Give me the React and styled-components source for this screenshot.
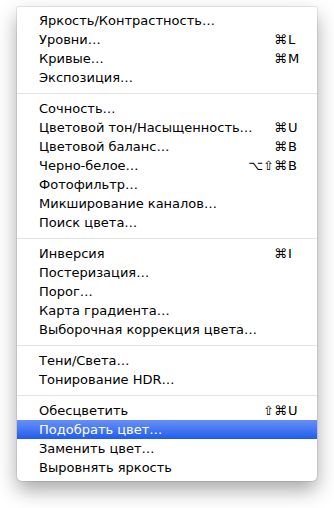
import React from 'react';
import styled, { createGlobalStyle } from 'styled-components';

const GlobalStyle = createGlobalStyle`
  html, body {
    margin: 0;
    padding: 0;
    background: #ffffff;
  }
  body {
    font-family: "DejaVu Sans", "Liberation Sans", sans-serif;
    -webkit-font-smoothing: antialiased;
  }
`;

const Page = styled.div`
  width: 334px;
  height: 508px;
  padding: 7px 0 0 17px;
  box-sizing: border-box;
`;

const Menu = styled.div`
  width: 300px;
  box-sizing: border-box;
  padding: 4px 0;
  background: #ffffff;
  border-radius: 2px 2px 5px 5px;
  box-shadow: 0 0 0 1px rgba(0, 0, 0, 0.08), 0 9px 20px rgba(0, 0, 0, 0.35);
`;

const Item = styled.div`
  display: flex;
  align-items: center;
  height: 19px;
  padding: 0 14px 0 22px;
  font-size: 13px;
  color: ${(p) => (p.$active ? '#ffffff' : '#000000')};
  background: ${(p) =>
    p.$active ? 'linear-gradient(to bottom, #6690f7 0%, #4a7af3 45%, #1f5cec 100%)' : 'transparent'};
`;

const Label = styled.span`
  flex: 1;
  white-space: nowrap;
`;

const Shortcut = styled.span`
  display: grid;
  grid-template-columns: auto 15px;
  align-items: center;
`;

const Mods = styled.span`
  text-align: right;
  padding-right: 1px;
  font-size: 13px;
`;

const Key = styled.span`
  text-align: left;
`;

const Separator = styled.div`
  height: 1px;
  margin: 6px 0 5px;
  background: #e3e3e3;
`;

const groups = [
  [
    ['Яркость/Контрастность…'],
    ['Уровни…', '⌘', 'L'],
    ['Кривые…', '⌘', 'M'],
    ['Экспозиция…'],
  ],
  [
    ['Сочность…'],
    ['Цветовой тон/Насыщенность…', '⌘', 'U'],
    ['Цветовой баланс…', '⌘', 'B'],
    ['Черно-белое…', '⌥⇧⌘', 'B'],
    ['Фотофильтр…'],
    ['Микширование каналов…'],
    ['Поиск цвета…'],
  ],
  [
    ['Инверсия', '⌘', 'I'],
    ['Постеризация…'],
    ['Порог…'],
    ['Карта градиента…'],
    ['Выборочная коррекция цвета…'],
  ],
  [['Тени/Света…'], ['Тонирование HDR…']],
  [
    ['Обесцветить', '⇧⌘', 'U'],
    ['Подобрать цвет…', null, null, true],
    ['Заменить цвет…'],
    ['Выровнять яркость'],
  ],
];

export default function App() {
  return (
    <Page>
      <GlobalStyle />
      <Menu>
        {groups.map((group, gi) => (
          <React.Fragment key={gi}>
            {gi > 0 && <Separator />}
            {group.map(([label, mods, key, active]) => (
              <Item key={label} $active={active}>
                <Label>{label}</Label>
                {key && (
                  <Shortcut>
                    <Mods>{mods}</Mods>
                    <Key>{key}</Key>
                  </Shortcut>
                )}
              </Item>
            ))}
          </React.Fragment>
        ))}
      </Menu>
    </Page>
  );
}
